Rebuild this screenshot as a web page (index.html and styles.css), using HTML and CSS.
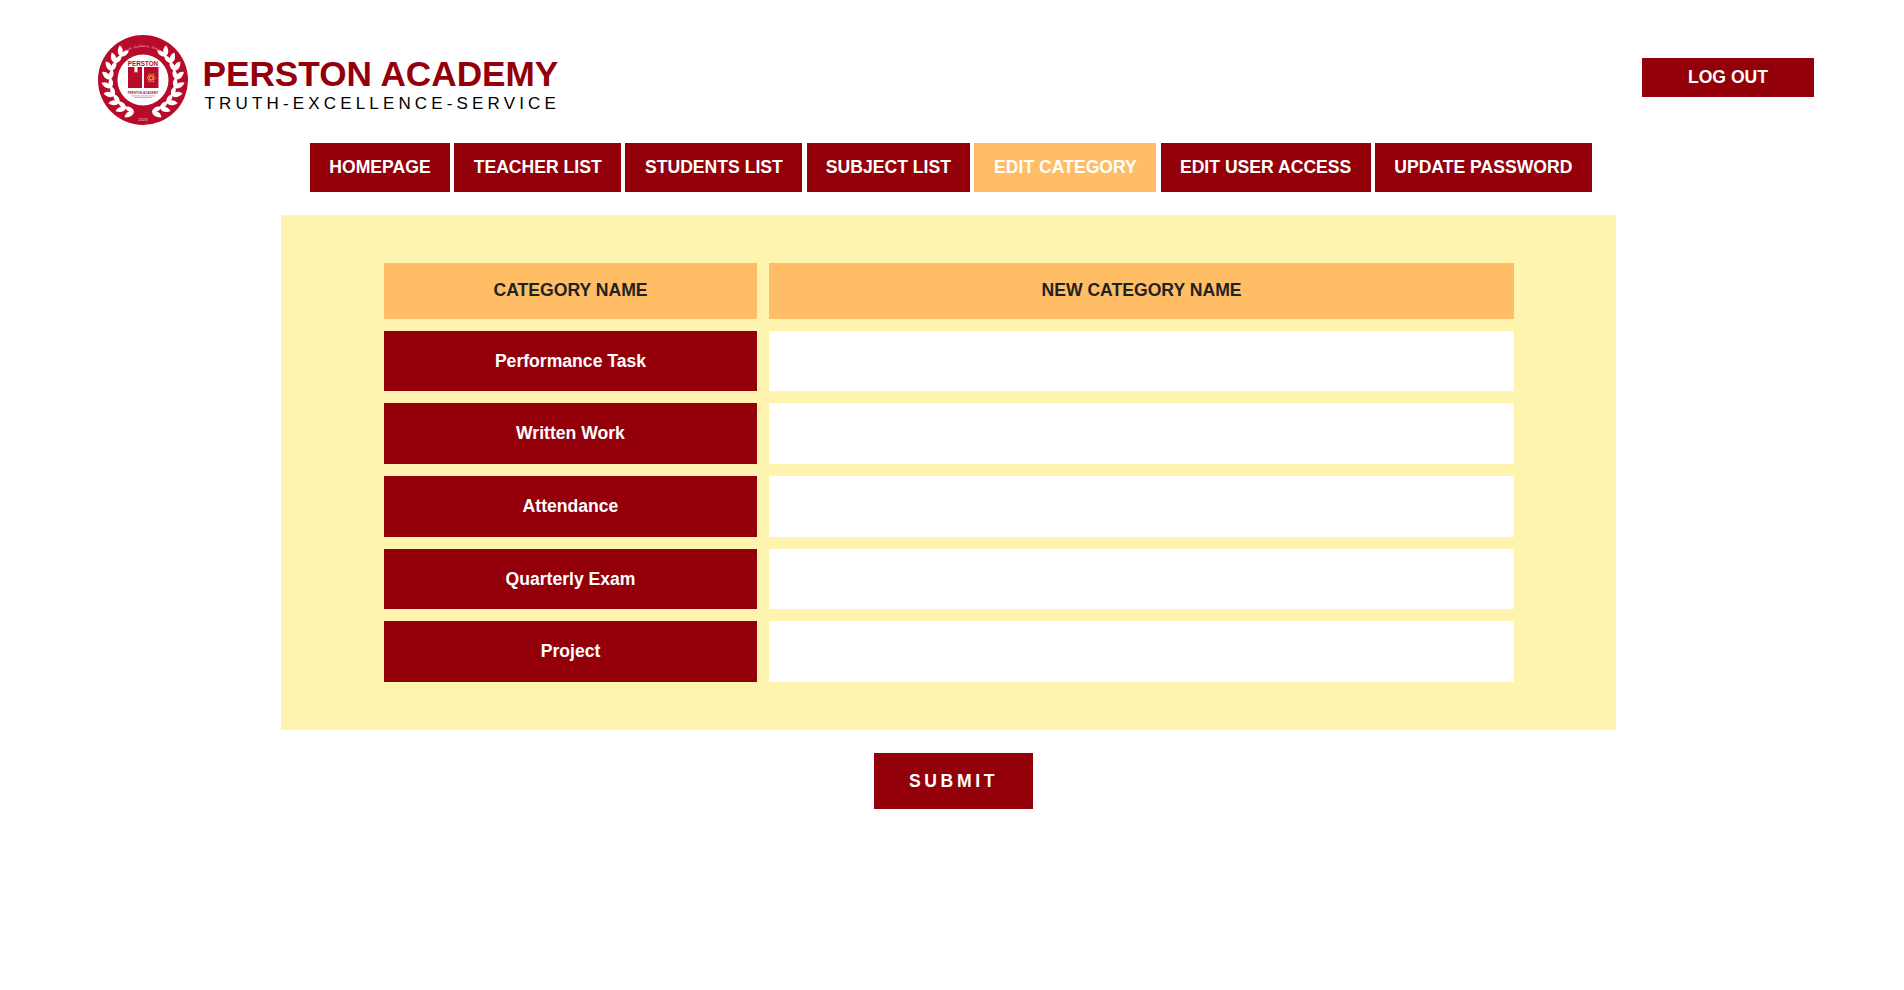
FILE: index.html
```html
<!DOCTYPE html>
<html lang="en">
<head>
<meta charset="utf-8">
<title>Edit Category</title>
<link rel="stylesheet" href="styles.css">
</head>
<body>
<header class="top">
  <div class="brand">
    <svg class="logo" viewBox="0 0 90 90" width="90" height="90" aria-hidden="true">
      <defs>
        <path id="arc" d="M12 45a33 33 0 0 1 66 0"/>
        <g id="pair">
          <path d="M45 12.500c-.6-4.200 2-7.200 7.400-8.500.6 4.900-2.400 8-7.400 8.500z"/>
          <path d="M45 12.500c3.200-2.700 7.100-2.300 10.200 1.400-3.700 2.600-7.400 1.700-10.200-1.400z"/>
        </g>
        <g id="wreath" fill="#fff">
          <use href="#pair" transform="rotate(-44 45 45)"/>
          <use href="#pair" transform="rotate(-59 45 45)"/>
          <use href="#pair" transform="rotate(-74 45 45)"/>
          <use href="#pair" transform="rotate(-89 45 45)"/>
          <use href="#pair" transform="rotate(-104 45 45)"/>
          <use href="#pair" transform="rotate(-119 45 45)"/>
          <use href="#pair" transform="rotate(-134 45 45)"/>
          <use href="#pair" transform="rotate(-149 45 45)"/>
          <use href="#pair" transform="rotate(-164 45 45)"/>
        </g>
      </defs>
      <circle cx="45" cy="45" r="45" fill="#b80b2b"/>
      <use href="#wreath"/>
      <use href="#wreath" transform="matrix(-1 0 0 1 90 0)"/>
      <circle cx="45" cy="45" r="25.500" fill="#fff"/>
      <text class="logo-arc"><textPath href="#arc" startOffset="50%" text-anchor="middle">Truth · Excellence · Service</textPath></text>
      <text class="logo-name" x="45" y="30.500" text-anchor="middle">PERSTON</text>
      <path d="M30 32h6.500v6l1.500-1.500 1.500 1.500v-6h4.500v21h-14z" fill="#b80b2b"/>
      <path d="M46 32h14.500v21h-14.500z" fill="#b80b2b"/>
      <g stroke="#f2a24a" stroke-width=".7" fill="none">
        <ellipse cx="53.200" cy="43" rx="4.500" ry="1.600"/>
        <ellipse cx="53.200" cy="43" rx="4.500" ry="1.600" transform="rotate(60 53.200 43)"/>
        <ellipse cx="53.200" cy="43" rx="4.500" ry="1.600" transform="rotate(120 53.200 43)"/>
      </g>
      <text class="logo-small" x="45" y="59" text-anchor="middle">PERSTON ACADEMY</text>
      <rect x="33" y="60.500" width="24" height=".8" fill="#e58a9b"/>
      <rect x="36" y="62.200" width="18" height=".8" fill="#e58a9b"/>
      <text class="logo-year" x="45" y="86" text-anchor="middle">2023</text>
    </svg>
    <div class="brand-text">
      <div class="brand-name">PERSTON ACADEMY</div>
      <div class="brand-tag">TRUTH-EXCELLENCE-SERVICE</div>
    </div>
  </div>
  <a class="logout" href="#">LOG OUT</a>
</header>

<nav class="nav">
  <a class="nav-item" href="#">HOMEPAGE</a>
  <a class="nav-item" href="#">TEACHER LIST</a>
  <a class="nav-item" href="#">STUDENTS LIST</a>
  <a class="nav-item" href="#">SUBJECT LIST</a>
  <a class="nav-item is-active" href="#">EDIT CATEGORY</a>
  <a class="nav-item" href="#">EDIT USER ACCESS</a>
  <a class="nav-item" href="#">UPDATE PASSWORD</a>
</nav>

<form class="form">
  <section class="panel">
    <table class="cat-table">
      <thead>
        <tr>
          <th class="col-name">CATEGORY NAME</th>
          <th>NEW CATEGORY NAME</th>
        </tr>
      </thead>
      <tbody>
        <tr><td class="cat">Performance Task</td><td class="cell"><input class="field" type="text"></td></tr>
        <tr><td class="cat tall">Written Work</td><td class="cell"><input class="field" type="text"></td></tr>
        <tr><td class="cat tall">Attendance</td><td class="cell"><input class="field" type="text"></td></tr>
        <tr><td class="cat">Quarterly Exam</td><td class="cell"><input class="field" type="text"></td></tr>
        <tr><td class="cat tall">Project</td><td class="cell"><input class="field" type="text"></td></tr>
      </tbody>
    </table>
  </section>
  <button class="submit" type="button">SUBMIT</button>
</form>
</body>
</html>
```
FILE: styles.css
```css
* { box-sizing: border-box; }

html, body { margin: 0; padding: 0; background: #fff; }

body {
  height: 990px;
  overflow: hidden;
  font-family: "Liberation Sans", Arial, sans-serif;
}

a { text-decoration: none; }

.top {
  display: flex;
  justify-content: space-between;
  align-items: flex-start;
  height: 143px;
  padding: 35px 90px 0 98px;
}

.brand { display: flex; align-items: flex-start; gap: 14.500px; }

.logo { display: block; flex: none; }
.logo-arc { font: 3px "Liberation Sans", sans-serif; fill: #f6c9d2; }
.logo-name { font: bold 6.300px "Liberation Sans", sans-serif; fill: #b80b2b; }
.logo-small { font: bold 3px "Liberation Sans", sans-serif; fill: #b80b2b; }
.logo-year { font: 4px "Liberation Sans", sans-serif; fill: #f6d5dc; }

.brand-text { padding-top: 20.500px; }

.brand-name {
  font-size: 35.200px;
  line-height: 36px;
  font-weight: 700;
  color: #93000a;
}

.brand-tag {
  margin-top: 2px;
  padding-left: 2px;
  font-size: 17px;
  line-height: 20px;
  letter-spacing: 4.160px;
  color: #000;
  white-space: nowrap;
}

.logout {
  display: flex;
  align-items: center;
  justify-content: center;
  width: 172px;
  height: 39px;
  margin-top: 23px;
  background: #93000a;
  color: #fff;
  font-size: 17.600px;
  font-weight: 700;
}

.nav {
  display: grid;
  grid-template-columns: 140px 167px 177px 163.700px 182px 210px 217px;
  column-gap: 4.200px;
  justify-content: start;
  height: 49px;
  margin-left: 310px;
}

.nav-item {
  display: flex;
  align-items: center;
  justify-content: center;
  background: #93000a;
  color: #fff;
  font-size: 17.600px;
  font-weight: 700;
  white-space: nowrap;
}

.nav-item.is-active { background: #ffbd66; }

.form {
  display: flex;
  flex-direction: column;
  align-items: flex-start;
  padding: 23px 0 0 281px;
}

.panel {
  width: 1335px;
  height: 515px;
  padding: 36px 91px;
  background: #fff3b0;
}

.cat-table {
  width: 1154px;
  border-collapse: separate;
  border-spacing: 12px;
  table-layout: fixed;
}

.cat-table th {
  height: 56px;
  padding: 0 0 2px;
  background: #ffbd66;
  color: #222;
  font-size: 17.600px;
  font-weight: 700;
  text-align: center;
}

.cat-table .col-name { width: 373px; }

.cat {
  height: 60px;
  padding: 0;
  background: #93000a;
  color: #fff;
  font-size: 17.600px;
  font-weight: 700;
  text-align: center;
}

.cat.tall { height: 61px; }

.cell { padding: 0; background: #fff; }

.field {
  display: block;
  width: 100%;
  height: 60px;
  border: 0;
  outline: 0;
  background: #fff;
}

.submit {
  width: 159px;
  height: 56px;
  margin: 23px 0 0 593px;
  border: 0;
  background: #93000a;
  color: #fff;
  font: 700 17.600px "Liberation Sans", Arial, sans-serif;
  letter-spacing: 3.600px;
}
```
